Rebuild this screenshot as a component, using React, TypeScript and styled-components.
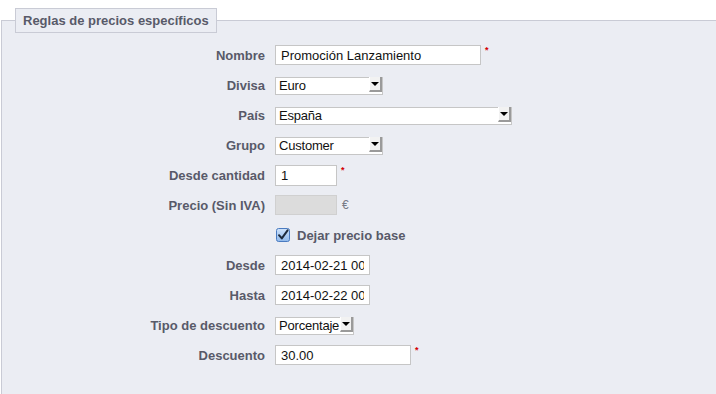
import styled, { createGlobalStyle } from 'styled-components';

const GlobalStyle = createGlobalStyle`
  html, body {
    margin: 0;
    padding: 0;
    background: #ffffff;
    overflow: hidden;
  }
  body {
    font-family: "Liberation Sans", Arial, sans-serif;
  }
`;

const Fieldset = styled.fieldset`
  margin: 8px 0 0 1px;
  padding: 0 0 20px 13px;
  border: 1px solid #c9cbd5;
  border-right: 0;
  background: #ebedf3;
  min-height: 400px;
`;

const Legend = styled.legend`
  padding: 0 7px;
  height: 25px;
  line-height: 23px;
  box-sizing: border-box;
  border: 1px solid #c9cbd5;
  background: #ebedf3;
  color: #585a69;
  font-size: 13px;
  font-weight: bold;
`;

const Form = styled.div`
  display: grid;
  grid-template-columns: 250px 1fr;
  column-gap: 10px;
  grid-auto-rows: 30px;
  padding-top: 7px;
`;

const Label = styled.label`
  display: flex;
  align-items: center;
  justify-content: flex-end;
  color: #585a69;
  font-size: 13px;
  font-weight: bold;
  white-space: nowrap;
`;

const Field = styled.div`
  display: flex;
  align-items: center;
`;

const Input = styled.input<{ $w: number; $h?: number }>`
  box-sizing: border-box;
  width: ${(p) => p.$w}px;
  height: ${(p) => p.$h ?? 20}px;
  margin: 0;
  padding: 0 5px;
  border: 1px solid #c6c6c6;
  background: #ffffff;
  color: #111;
  font-family: "Liberation Sans", Arial, sans-serif;
  font-size: 13px;
  outline: none;

  &:disabled {
    background: #dcdcdc;
    border-color: #d0d0d0;
  }
`;

const SelectWrap = styled.div<{ $w: number }>`
  position: relative;
  width: ${(p) => p.$w}px;
  height: 18px;
`;

const Select = styled.select`
  appearance: none;
  box-sizing: border-box;
  width: 100%;
  height: 100%;
  margin: 0;
  padding: 0 0 0 3px;
  border: 1px solid #c6c6c6;
  border-radius: 0;
  background: #ffffff;
  color: #111;
  font-family: "Liberation Sans", Arial, sans-serif;
  font-size: 13px;
  letter-spacing: -0.2px;
  outline: none;
`;

const Arrow = styled.span`
  position: absolute;
  right: 1px;
  top: 1px;
  width: 13px;
  height: 15px;
  box-sizing: border-box;
  background: #f2f2f2;
  border-right: 2px solid #9a9a9a;
  border-bottom: 2px solid #9a9a9a;
  border-left: 1px solid #ffffff;
  display: flex;
  align-items: center;
  justify-content: center;
  pointer-events: none;

  &::after {
    content: '';
    width: 0;
    height: 0;
    border-left: 4px solid transparent;
    border-right: 4px solid transparent;
    border-top: 4px solid #000;
    margin-top: 1px;
  }
`;

const Required = styled.sup`
  align-self: flex-start;
  margin: 7px 0 0 4px;
  color: #d40000;
  font-size: 9px;
  line-height: 6px;
  font-weight: bold;
`;

const Currency = styled.span`
  margin-left: 5px;
  color: #777a86;
  font-size: 12px;
`;

const CheckLabel = styled.label`
  display: flex;
  align-items: center;
  gap: 7px;
  color: #585a69;
  font-size: 13px;
  font-weight: bold;
  padding-left: 1px;
`;

const Footnote = styled.p`
  margin: 22px 0 0 2px;
  color: #585a69;
  font-size: 11px;
`;

const Star = styled.span`
  color: #d40000;
`;

const CheckIcon = () => (
  <svg width="14" height="14" viewBox="0 0 14 14">
    <defs>
      <linearGradient id="cb" x1="0" y1="0" x2="0" y2="1">
        <stop offset="0" stopColor="#cfe3fb" />
        <stop offset="1" stopColor="#8fb8ea" />
      </linearGradient>
    </defs>
    <rect x="0.5" y="0.5" width="13" height="13" rx="2" fill="url(#cb)" stroke="#4a7bc0" />
    <path d="M3 7.2 L5.8 10.4 L11.6 2.4" fill="none" stroke="#1d2a3c" strokeWidth="2" strokeLinecap="round" strokeLinejoin="round" />
  </svg>
);

const Dropdown = ({ w, value }: { w: number; value: string }) => (
  <SelectWrap $w={w}>
    <Select defaultValue={value}>
      <option>{value}</option>
    </Select>
    <Arrow />
  </SelectWrap>
);

export default function App() {
  return (
    <>
      <GlobalStyle />
      <Fieldset>
        <Legend>Reglas de precios específicos</Legend>
        <Form>
          <Label>Nombre</Label>
          <Field>
            <Input $w={206} defaultValue="Promoción Lanzamiento" />
            <Required>*</Required>
          </Field>

          <Label>Divisa</Label>
          <Field>
            <Dropdown w={108} value="Euro" />
          </Field>

          <Label>País</Label>
          <Field>
            <Dropdown w={237} value="España" />
          </Field>

          <Label>Grupo</Label>
          <Field>
            <Dropdown w={108} value="Customer" />
          </Field>

          <Label>Desde cantidad</Label>
          <Field>
            <Input $w={62} $h={21} defaultValue="1" />
            <Required>*</Required>
          </Field>

          <Label>Precio (Sin IVA)</Label>
          <Field>
            <Input $w={62} disabled defaultValue="" />
            <Currency>€</Currency>
          </Field>

          <div />
          <Field>
            <CheckLabel>
              <CheckIcon />
              Dejar precio base
            </CheckLabel>
          </Field>

          <Label>Desde</Label>
          <Field>
            <Input $w={95} defaultValue="2014-02-21 00:00:00" />
          </Field>

          <Label>Hasta</Label>
          <Field>
            <Input $w={95} defaultValue="2014-02-22 00:00:00" />
          </Field>

          <Label>Tipo de descuento</Label>
          <Field>
            <Dropdown w={79} value="Porcentaje" />
          </Field>

          <Label>Descuento</Label>
          <Field>
            <Input $w={136} defaultValue="30.00" />
            <Required>*</Required>
          </Field>
        </Form>
        <Footnote>
          <Star>*</Star> Campo requerido
        </Footnote>
      </Fieldset>
    </>
  );
}
